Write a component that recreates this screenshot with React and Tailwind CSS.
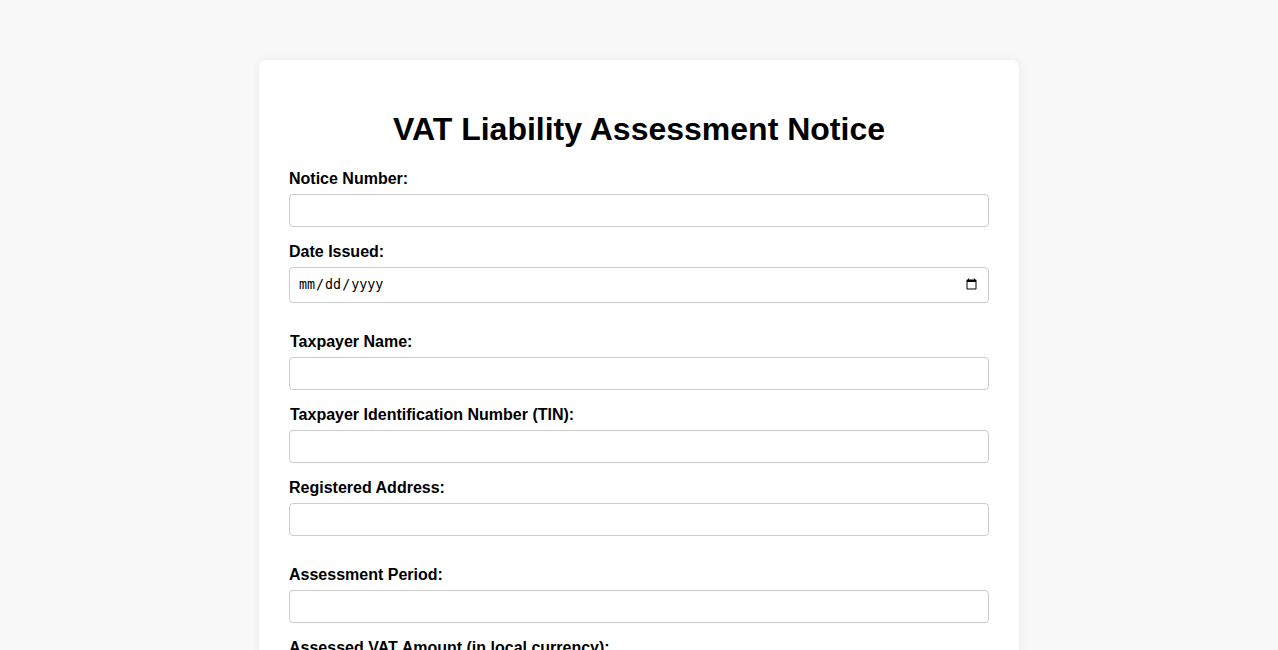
import React from 'react';

const labelCls = 'block mb-[6px] text-[16px] leading-[19px] font-bold text-black';
const inputCls =
  'block w-full h-[33px] px-[8px] border border-[#cccccc] rounded-[4px] bg-white text-[13.333px] font-["Liberation_Sans",Arial,sans-serif] outline-none';

function Field({ label, type = 'text', shift = false, last = false }) {
  return (
    <div className={last ? '' : 'mb-[15px]'}>
      <label className={`${labelCls} ${shift ? 'pl-px' : ''}`}>{label}</label>
      {type === 'date' ? (
        <input
          type="date"
          className="block w-full h-[36px] px-[8px] border border-[#cccccc] rounded-[4px] bg-white text-[13.333px] text-black font-['DejaVu_Sans_Mono',monospace] outline-none"
        />
      ) : (
        <input type="text" className={inputCls} />
      )}
    </div>
  );
}

export default function App() {
  return (
    <div className="min-h-screen bg-[#f8f8f8] pt-[60px] pb-[40px] font-['Liberation_Sans',Arial,sans-serif]">
      <div className="mx-auto w-[760px] bg-white rounded-[8px] shadow-[0_0_10px_rgba(0,0,0,0.06)] px-[30px] pt-[30px] pb-[30px]">
        <h1 className="text-center text-[32px] leading-[37px] font-bold text-black mt-[21px] mb-[20.5px]">
          VAT Liability Assessment Notice
        </h1>

        {/* Notice details */}
        <Field label="Notice Number:" />
        <Field label="Date Issued:" type="date" last />

        {/* Taxpayer details */}
        <div className="mt-[29px]">
          <Field label="Taxpayer Name:" shift />
          <Field label="Taxpayer Identification Number (TIN):" shift />
          <Field label="Registered Address:" last />
        </div>

        {/* Assessment details */}
        <div className="mt-[29px]">
          <Field label="Assessment Period:" />
          <Field label="Assessed VAT Amount (in local currency):" />
          <Field label="Penalties and Interest:" />
          <Field label="Total Amount Due:" last />
        </div>
      </div>
    </div>
  );
}
